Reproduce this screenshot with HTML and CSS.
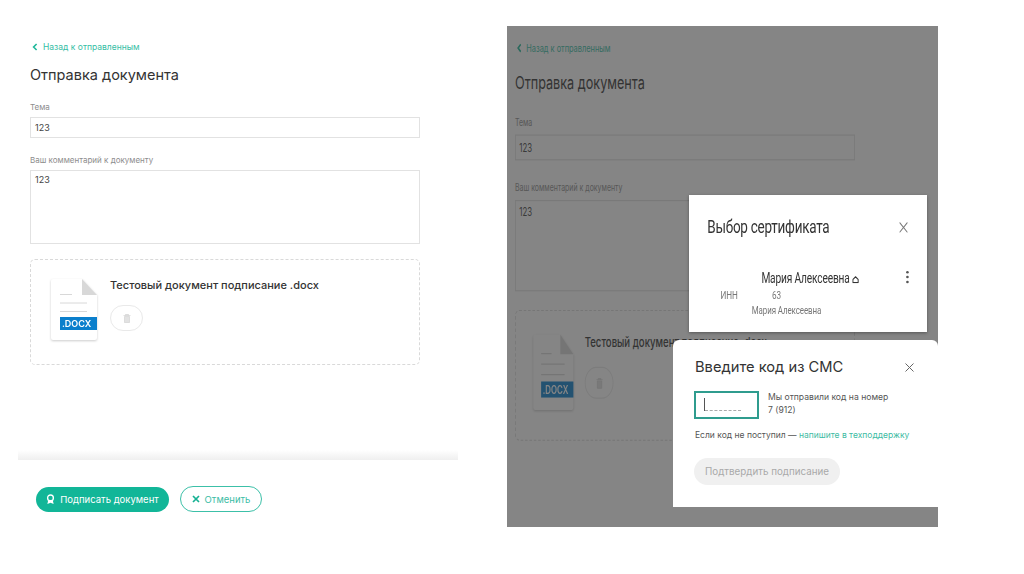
FILE: index.html
```html
<!DOCTYPE html>
<html lang="en">
<head>
  <meta charset="UTF-8">
  <title>Отправка документа</title>
  <link rel="stylesheet" href="styles.css">
</head>
<body>
  <div class="slide">
    <!-- Left screenshot -->
    <section class="shot">
      <div class="doc-form">
        <a class="back-link"><svg width="6" height="8" viewBox="0 0 6 8"><path d="M4.600 1 1.600 4l3 3" fill="none" stroke="#1fb89a" stroke-width="1.600"/></svg>Назад к отправленным</a>
        <h1>Отправка документа</h1>
        <label>Тема</label>
        <div class="field">123</div>
        <label class="label-comment">Ваш комментарий к документу</label>
        <div class="field field-area">123</div>
        <div class="drop-box">
          <svg class="doc-icon" width="49" height="65" viewBox="0 0 49 65">
            <path d="M3 1h29l15 16v43a2 2 0 0 1-2 2H3a2 2 0 0 1-2-2V3a2 2 0 0 1 2-2z" fill="#fff"/>
            <path d="M32 1l15 16H32z" fill="#d8d8d8"/>
            <path d="M10 16.500h12M10 25h27M10 33.500h27" stroke="#d8d8d8"/>
            <rect x="10" y="39" width="37" height="13" fill="#0b7fcc"/>
            <text x="12" y="49" class="doc-ext">.DOCX</text>
          </svg>
          <div class="file-info">
            <div class="file-name">Тестовый документ подписание .docx</div>
            <div class="trash-btn"><svg width="8" height="9" viewBox="0 0 8 9"><path d="M.5 1.500h7M2.500 1.500V.500h3v1M1.500 2.500h5V8.500h-5z" fill="#e2e2e2" stroke="#d2d2d2" stroke-width=".7"/></svg></div>
          </div>
        </div>
      </div>
      <div class="fade-line"></div>
      <div class="actions">
        <button class="btn-sign"><svg width="9" height="11" viewBox="0 0 10 12"><circle cx="5" cy="4.200" r="3.200" fill="none" stroke="#fff" stroke-width="1.500"/><path d="M2.400 7 1.500 11 5 9.500 8.500 11 7.600 7z" fill="#fff"/></svg>Подписать документ</button>
        <button class="btn-cancel"><svg width="8" height="8" viewBox="0 0 8 8"><path d="M1 1l6 6M7 1 1 7" stroke="#16b193" stroke-width="1.700"/></svg>Отменить</button>
      </div>
    </section>

    <!-- Right screenshot: same form squeezed, dimmed, two dialogs on top -->
    <section class="dim-shot">
      <div class="doc-form squeezed">
        <a class="back-link"><svg width="6" height="8" viewBox="0 0 6 8"><path d="M4.600 1 1.600 4l3 3" fill="none" stroke="#1fb89a" stroke-width="1.600"/></svg>Назад к отправленным</a>
        <h1>Отправка документа</h1>
        <label>Тема</label>
        <div class="field">123</div>
        <label class="label-comment">Ваш комментарий к документу</label>
        <div class="field field-area">123</div>
        <div class="drop-box">
          <svg class="doc-icon" width="49" height="65" viewBox="0 0 49 65">
            <path d="M3 1h29l15 16v43a2 2 0 0 1-2 2H3a2 2 0 0 1-2-2V3a2 2 0 0 1 2-2z" fill="#fff"/>
            <path d="M32 1l15 16H32z" fill="#d8d8d8"/>
            <path d="M10 16.500h12M10 25h27M10 33.500h27" stroke="#d8d8d8"/>
            <rect x="10" y="39" width="37" height="13" fill="#0b7fcc"/>
            <text x="12" y="49" class="doc-ext">.DOCX</text>
          </svg>
          <div class="file-info">
            <div class="file-name">Тестовый документ подписание .docx</div>
            <div class="trash-btn"><svg width="8" height="9" viewBox="0 0 8 9"><path d="M.5 1.500h7M2.500 1.500V.500h3v1M1.500 2.500h5V8.500h-5z" fill="#e2e2e2" stroke="#d2d2d2" stroke-width=".7"/></svg></div>
          </div>
        </div>
      </div>
      <div class="dim-overlay"></div>

      <div class="cert-dialog">
        <div class="cert-body">
          <div class="cert-head">
            <h3>Выбор сертификата</h3>
            <svg width="10" height="9" viewBox="0 0 10 9"><path d="M.5.500l9 8M9.500.500l-9 8" stroke="#777"/></svg>
          </div>
          <div class="cert-name">Мария Алексеевна <svg width="8" height="6" viewBox="0 0 8 6"><path d="M1 5.500h6V3L4 .8 1 3z" fill="none" stroke="#333" stroke-width="1.100" stroke-linejoin="round"/></svg></div>
          <div class="cert-inn"><span>ИНН</span><span>63</span></div>
          <div class="cert-owner">Мария Алексеевна</div>
          <div class="cert-menu"><i></i><i></i><i></i></div>
        </div>
      </div>

      <div class="sms-dialog">
        <div class="sms-head">
          <h3>Введите код из СМС</h3>
          <svg width="9" height="9" viewBox="0 0 9 9"><path d="M.5.500l8 8M8.500.500l-8 8" stroke="#666"/></svg>
        </div>
        <div class="sms-row">
          <div class="code-input"><span class="caret"></span><span class="code-dash"></span></div>
          <p>Мы отправили код на номер<br>7 (912)</p>
        </div>
        <p class="sms-help">Если код не поступил — <a>напишите в техподдержку</a></p>
        <button class="btn-confirm">Подтвердить подписание</button>
      </div>
    </section>
  </div>
</body>
</html>
```

FILE: styles.css
```css
* {
  box-sizing: border-box;
}

html, body {
  margin: 0;
  height: 574px;
  overflow: hidden;
  background: #fff;
}

body {
  font-family: 'Inter', 'Liberation Sans', sans-serif;
  color: #333;
}

.slide {
  display: flex;
  align-items: flex-start;
  width: 1024px;
  height: 574px;
  padding-left: 18px;
}

/* Left screenshot */
.shot {
  width: 440px;
  margin-right: 49px;
}

.doc-form {
  width: 440px;
  height: 450px;
  padding: 41px 38px 0 12px;
}

.back-link {
  display: flex;
  align-items: center;
  gap: 5px;
  height: 11px;
  padding-left: 2px;
  font-size: 8.500px;
  color: #35bea5;
}

.doc-form h1 {
  margin: 12px 0 0;
  font-size: 14.500px;
  line-height: 22px;
  font-weight: 400;
  color: #333;
}

.doc-form label {
  display: block;
  margin-top: 15px;
  height: 12px;
  font-size: 8px;
  line-height: 12px;
  color: #8d8d8d;
}

.doc-form .label-comment {
  margin-top: 16px;
}

.field {
  height: 21px;
  margin-top: 4px;
  padding-left: 4px;
  border: 1px solid #e2e2e2;
  font-size: 9px;
  line-height: 19px;
  color: #444;
}

.field-area {
  height: 74px;
  margin-top: 4px;
  line-height: 17px;
}

.drop-box {
  display: flex;
  height: 106px;
  margin-top: 15px;
  padding: 18px 0 0 19px;
  border: 1px dashed #d9d9d9;
  border-radius: 5px;
}

.doc-icon {
  flex: none;
  filter: drop-shadow(0 1px 1px rgba(0, 0, 0, .2));
}

.doc-ext {
  font-size: 9px;
  font-weight: 600;
  fill: #fff;
}

.file-info {
  margin-left: 11px;
  padding-top: 1px;
}

.file-name {
  font-size: 11px;
  line-height: 13px;
  font-weight: 500;
  color: #333;
  white-space: nowrap;
}

.trash-btn {
  display: flex;
  align-items: center;
  justify-content: center;
  width: 33px;
  height: 26px;
  margin-top: 13px;
  border: 1px solid #e9e9e9;
  border-radius: 13px;
}

.fade-line {
  height: 10px;
  background: linear-gradient(to bottom, #fff, #efefef);
}

.actions {
  display: flex;
  align-items: center;
  gap: 11px;
  margin-top: 26px;
  padding-left: 18px;
}

.actions button {
  display: flex;
  align-items: center;
  justify-content: center;
  font-family: inherit;
  font-size: 9.500px;
  padding: 0;
}

.btn-sign {
  gap: 5px;
  width: 133px;
  height: 25px;
  border: none;
  border-radius: 13px;
  background: #12b698;
  color: #fff;
}

.btn-cancel {
  gap: 5px;
  width: 82px;
  height: 26px;
  border: 1px solid #3cc0a8;
  border-radius: 13px;
  background: #fff;
  color: #3bbda6;
}

/* Right screenshot */
.dim-shot {
  position: relative;
  width: 431px;
  height: 501px;
  margin-top: 26px;
  overflow: hidden;
  background: #fff;
}

/* the second picture is the same form, resized out of proportion */
.squeezed {
  transform-origin: 0 0;
  transform: translate(-2.500px, -36px) scale(.872, 1.235);
}

.dim-overlay {
  position: absolute;
  inset: 0;
  background: rgba(52, 52, 52, .6);
}

.cert-dialog {
  position: absolute;
  left: 182px;
  top: 169px;
  width: 238px;
  height: 137px;
  background: #fff;
  box-shadow: 0 1px 3px rgba(0, 0, 0, .35);
  font-family: 'Roboto', 'Liberation Sans', sans-serif;
}

.cert-body {
  position: relative;
  width: 273px;
  height: 112px;
  padding: 16px 22px 0 21px;
  transform-origin: 0 0;
  transform: scale(.872, 1.225);
}

.cert-head {
  display: flex;
  align-items: center;
  justify-content: space-between;
}

.cert-head h3 {
  margin: 0;
  font-size: 15.500px;
  line-height: 20px;
  font-weight: 400;
  letter-spacing: -.3px;
  color: #333;
}

.cert-name {
  margin: 25px 0 0 62px;
  font-size: 11.700px;
  line-height: 14px;
  letter-spacing: -.2px;
  color: #333;
}

.cert-inn {
  display: flex;
  gap: 39px;
  margin: 1px 0 0 15px;
  font-size: 9.400px;
  line-height: 12px;
  color: #777;
}

.cert-owner {
  margin: 1px 0 0 51px;
  font-size: 9.100px;
  line-height: 11px;
  letter-spacing: -.1px;
  color: #777;
}

.cert-menu {
  position: absolute;
  right: 21px;
  top: 62px;
  display: flex;
  flex-direction: column;
  gap: 2px;
}

.cert-menu i {
  width: 3px;
  height: 2px;
  background: #555;
  border-radius: 50%;
}

.sms-dialog {
  position: absolute;
  left: 166px;
  top: 314px;
  width: 265px;
  height: 167px;
  padding: 17px 24px 0 21px;
  background: #fff;
  border-radius: 6px 6px 0 0;
}

.sms-head {
  display: flex;
  align-items: center;
  justify-content: space-between;
  padding-left: 1px;
}

.sms-head h3 {
  margin: 0;
  font-size: 14.700px;
  line-height: 20px;
  font-weight: 400;
  color: #333;
}

.sms-row {
  display: flex;
  gap: 9px;
  margin-top: 14px;
}

.sms-row p {
  margin: 0;
  font-size: 8.600px;
  line-height: 13px;
  color: #555;
}

.code-input {
  display: flex;
  align-items: flex-end;
  flex: none;
  width: 65px;
  height: 28px;
  padding: 0 0 6px 8px;
  border: 2px solid #2f9c8e;
}

.caret {
  width: 1px;
  height: 13px;
  background: #555;
}

.code-dash {
  width: 36px;
  border-bottom: 1px dashed #aaa;
}

.sms-help {
  margin: 10px 0 0 1px;
  font-size: 8.500px;
  line-height: 12px;
  color: #555;
}

.sms-help a {
  color: #3dbba3;
}

.btn-confirm {
  display: block;
  width: 146px;
  height: 27px;
  margin-top: 17px;
  padding: 0;
  border: none;
  border-radius: 14px;
  background: #f0f0f0;
  font-family: inherit;
  font-size: 9.800px;
  color: #a9a9a9;
}
```
